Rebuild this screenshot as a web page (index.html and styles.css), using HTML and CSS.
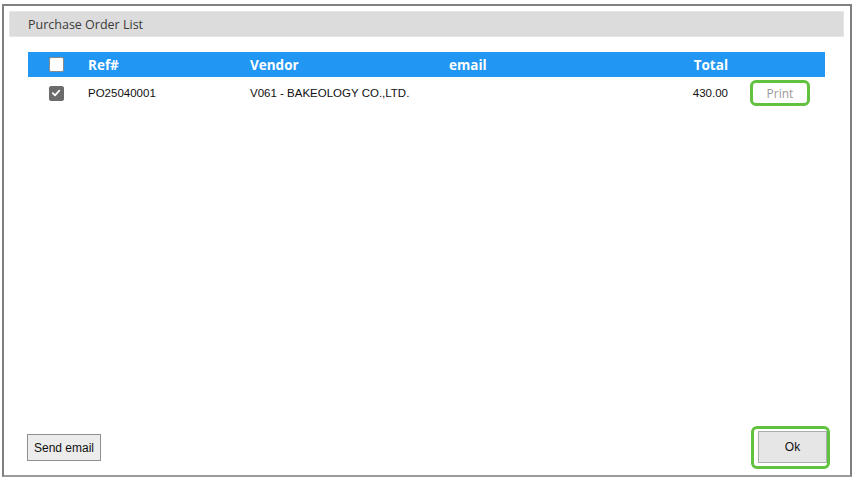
FILE: index.html
```html
<!DOCTYPE html>
<html>
<head>
<meta charset="utf-8">
<link rel="stylesheet" href="styles.css">
</head>
<body>
<div class="frame">
  <div class="titlebar">Purchase Order List</div>
  <div class="list">
    <div class="row head">
      <div class="c-check"><span class="box"></span></div>
      <div class="c-ref">Ref#</div>
      <div class="c-vendor">Vendor</div>
      <div class="c-email">email</div>
      <div class="c-total">Total</div>
      <div class="c-act"></div>
    </div>
    <div class="row item">
      <div class="c-check"><span class="box checked"><svg width="10" height="10" viewBox="0 0 10 10"><path d="M1.8 5.2 L4 7.4 L8.3 2.6" fill="none" stroke="#fff" stroke-width="1.8" stroke-linecap="round" stroke-linejoin="round"/></svg></span></div>
      <div class="c-ref">PO25040001</div>
      <div class="c-vendor">V061 - BAKEOLOGY CO.,LTD.</div>
      <div class="c-email"></div>
      <div class="c-total">430.00</div>
      <div class="c-act"><span class="print">Print</span></div>
    </div>
  </div>
  <div class="footer">
    <button class="btn send">Send email</button>
    <div class="ok-wrap"><button class="btn ok">Ok</button></div>
  </div>
</div>
</body>
</html>
```
FILE: styles.css
```css
html, body {
  margin: 0;
  padding: 0;
  background: #fff;
}
body {
  padding: 4px 0 0 2px;
  font-family: "Liberation Sans", Arial, sans-serif;
}
.frame {
  width: 846px;
  height: 464px;
  border: 2px solid #808080;
  border-bottom-color: #9a9a9a;
  display: flex;
  flex-direction: column;
  padding: 5px 0 0 0;
  box-sizing: content-box;
}
.titlebar {
  margin: 0 6px 0 5px;
  height: 26px;
  background: #dcdcdc;
  border: 1px solid #e6e6e6;
  box-sizing: border-box;
  font-family: "Open Sans", sans-serif;
  font-size: 12.5px;
  color: #3a3a3a;
  line-height: 25px;
  padding-left: 18px;
}
.list {
  flex: 1;
  margin: 15px 25px 0 24px;
}
.row {
  display: grid;
  grid-template-columns: 56px 162px 199px 205px 82px 92px;
  align-items: center;
}
.head {
  height: 25px;
  background: #2196f3;
  color: #fff;
  font-family: "Open Sans", sans-serif;
  font-weight: bold;
  font-size: 13.5px;
}
.item {
  height: 32px;
  font-size: 11.5px;
  color: #111;
}
.c-check {
  display: flex;
  justify-content: center;
}
.c-ref, .c-vendor, .c-email {
  padding-left: 4px;
}
.c-total {
  text-align: right;
  padding-right: 4px;
}
.box {
  width: 13px;
  height: 13px;
  background: #fff;
  border: 1px solid #8a8a8a;
  border-radius: 2px;
  display: flex;
  align-items: center;
  justify-content: center;
}
.box.checked {
  background: #6b6b6b;
  border-color: #6b6b6b;
}
.c-act {
  padding-left: 18px;
}
.print {
  display: flex;
  align-items: center;
  justify-content: center;
  width: 60px;
  height: 26px;
  box-sizing: border-box;
  border: 3px solid #60c23f;
  border-radius: 6px;
  color: #9a9a9a;
  font-family: "Open Sans", sans-serif;
  font-size: 12px;
}
.footer {
  display: flex;
  justify-content: space-between;
  align-items: center;
  padding: 0 20px 6px 23px;
}
.btn {
  font-family: "Liberation Sans", Arial, sans-serif;
  font-size: 12px;
  color: #111;
  background: #ececec;
  border: 1px solid #8f8f8f;
  border-radius: 0;
  padding: 0;
  margin: 0;
}
.send {
  width: 74px;
  height: 27px;
}
.ok-wrap {
  border: 3px solid #60c23f;
  border-radius: 6px;
  padding: 2px 0 3px 4px;
  display: flex;
}
.ok {
  width: 69px;
  height: 32px;
  background: #e6e6e6;
  border-color: #adadad;
}
```
